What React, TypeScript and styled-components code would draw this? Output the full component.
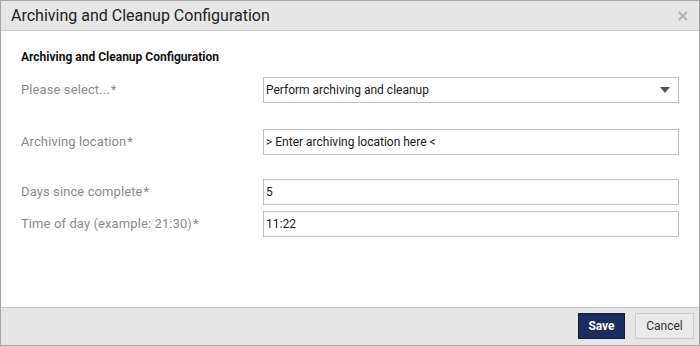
import styled, { createGlobalStyle } from 'styled-components';

const GlobalStyle = createGlobalStyle`
  html, body {
    margin: 0;
    padding: 0;
    background: #ffffff;
    font-family: Roboto, 'Liberation Sans', Arial, sans-serif;
  }
  * {
    box-sizing: border-box;
  }
`;

const Dialog = styled.div`
  width: 700px;
  height: 346px;
  border: 1px solid #a6a6a6;
  display: flex;
  flex-direction: column;
  background: #ffffff;
`;

const Header = styled.div`
  height: 30px;
  flex: none;
  background: #e6e6e6;
  border-bottom: 1px solid #c6c6c6;
  display: flex;
  align-items: center;
  justify-content: space-between;
  padding: 0 11px 0 10px;
`;

const Title = styled.h1`
  margin: 0;
  font-size: 16px;
  font-weight: 400;
  color: #222222;
  line-height: 29px;
`;

const CloseButton = styled.button`
  border: none;
  background: none;
  padding: 0;
  width: 10px;
  height: 10px;
  display: flex;
  cursor: pointer;
`;

const Body = styled.div`
  flex: 1;
  padding: 19px 20px 0 20px;
`;

const SectionTitle = styled.h2`
  margin: 0 0 13px 0;
  font-size: 12px;
  font-weight: 700;
  line-height: 14px;
  color: #111111;
`;

const Row = styled.div<{ $space: number }>`
  display: grid;
  grid-template-columns: 242px 416px;
  align-items: center;
  margin-top: ${(p) => p.$space}px;
`;

const Label = styled.label`
  font-size: 13px;
  letter-spacing: 0.1px;
  color: #8a8a8a;
  line-height: 16px;
`;

const Required = styled.span`
  margin-left: 1px;
`;

const Field = styled.div`
  height: 26px;
  border: 1px solid #bfbfbf;
  background: #ffffff;
  display: flex;
  align-items: center;
  justify-content: space-between;
  padding: 0 6px 0 2px;
  font-size: 12px;
  color: #1a1a1a;
`;

const Arrow = styled.span`
  width: 0;
  height: 0;
  border-left: 5px solid transparent;
  border-right: 5px solid transparent;
  border-top: 6px solid #555555;
  margin-right: 2px;
`;

const Footer = styled.div`
  height: 38px;
  flex: none;
  background: #e6e6e6;
  border-top: 1px solid #c6c6c6;
  display: flex;
  justify-content: flex-end;
  align-items: flex-start;
  gap: 10px;
  padding: 5px 5px 0 0;
`;

const Button = styled.button<{ $primary?: boolean }>`
  height: 26px;
  padding: 0;
  width: ${(p) => (p.$primary ? '47px' : '59px')};
  font-family: Roboto, 'Liberation Sans', Arial, sans-serif;
  font-size: 12px;
  font-weight: ${(p) => (p.$primary ? 700 : 400)};
  color: ${(p) => (p.$primary ? '#ffffff' : '#333333')};
  background: ${(p) => (p.$primary ? '#1b2c5f' : '#e9e9e9')};
  border: 1px solid ${(p) => (p.$primary ? '#0e1a3d' : '#cfcfcf')};
  cursor: pointer;
`;

const fields = [
  { label: 'Please select...', value: 'Perform archiving and cleanup', select: true, space: 0 },
  { label: 'Archiving location', value: '> Enter archiving location here <', space: 26 },
  { label: 'Days since complete', value: '5', space: 24 },
  { label: 'Time of day (example: 21:30)', value: '11:22', space: 6 },
];

export default function App() {
  return (
    <>
      <GlobalStyle />
      <Dialog>
        <Header>
          <Title>Archiving and Cleanup Configuration</Title>
          <CloseButton aria-label="Close">
            <svg width="10" height="10" viewBox="0 0 10 10">
              <path d="M1 1 L9 9 M9 1 L1 9" stroke="#b4b4b4" strokeWidth="2" />
            </svg>
          </CloseButton>
        </Header>
        <Body>
          <SectionTitle>Archiving and Cleanup Configuration</SectionTitle>
          {fields.map((f) => (
            <Row key={f.label} $space={f.space}>
              <Label>
                {f.label}
                <Required>*</Required>
              </Label>
              <Field>
                <span>{f.value}</span>
                {f.select && <Arrow />}
              </Field>
            </Row>
          ))}
        </Body>
        <Footer>
          <Button $primary>Save</Button>
          <Button>Cancel</Button>
        </Footer>
      </Dialog>
    </>
  );
}
